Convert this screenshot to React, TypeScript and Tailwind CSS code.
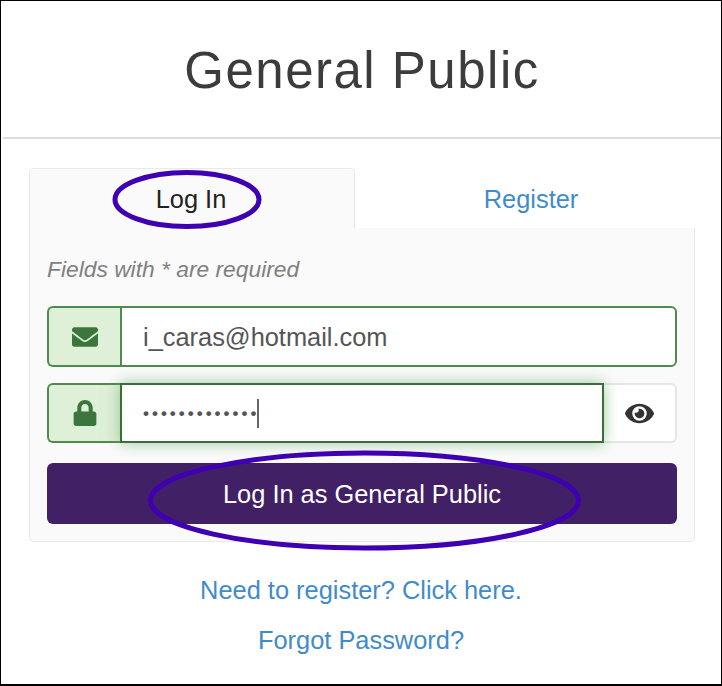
import { FaEnvelope, FaLock, FaEye } from "react-icons/fa";

export default function App() {
  return (
    <div className="relative w-[722px] h-[686px] bg-white border-t border-l border-r border-b-2 border-black overflow-hidden text-[#333] [font-family:'Liberation_Sans',Arial,sans-serif]">
      <div className="ml-[2px] h-[138px] border-b-2 border-[#dcdcdc] flex items-center justify-center">
        <h1 className="text-[51px] leading-[60px] tracking-[1.5px] text-[#3c3c3c] font-normal pt-[4px]">General Public</h1>
      </div>
      <div className="ml-[28px] w-[666px] mt-[29px]">
        <div className="flex h-[60px]">
          <div className="w-[326px] h-[60px] bg-[#fafafa] border-t border-l border-r border-[#e9e9e9] rounded-t-[5px] flex items-center justify-center text-[25.4px] text-[#222] pt-[2px] pr-[2px]">Log In</div>
          <div className="flex-1 flex items-center justify-center text-[25.4px] text-[#428bca] pl-[12px] pt-[3px]">Register</div>
        </div>
        <div className="h-[314px] bg-[#fafafa] border-l border-r border-b border-[#e9e9e9] rounded-b-[5px] px-[17px] pt-[27px]">
          <p className="text-[22.8px] leading-[28px] italic text-[#808080]">Fields with * are required</p>
          <div className="mt-[23px] h-[61px] flex">
            <div className="w-[73px] bg-[#dff0d8] border-2 border-r-0 border-[#4f8a4f] rounded-l-[6px] flex items-center justify-center text-[#3c763d] text-[26px]"><FaEnvelope /></div>
            <div className="flex-1 bg-white border-2 border-[#4f8a4f] rounded-r-[6px] flex items-center pl-[21px] text-[25.4px] text-[#555] pt-[1px]">i_caras@hotmail.com</div>
          </div>
          <div className="mt-[16px] h-[60px] flex">
            <div className="w-[73px] bg-[#dff0d8] border-2 border-r-0 border-[#4f8a4f] rounded-l-[6px] flex items-center justify-center text-[#3c763d] text-[26px]"><FaLock /></div>
            <div className="relative w-[484px] bg-white border-2 border-[#3c6e3d] shadow-[0_0_14px_rgba(80,160,80,0.55)] flex items-center pl-[21px] text-[#555]">
              <span className="text-[17px] tracking-[3px] font-bold leading-none">•••••••••••••</span>
              <span className="w-[2px] h-[29px] bg-[#666] -ml-[2px]"></span>
            </div>
            <div className="flex-1 bg-white border-2 border-l-0 border-[#e6e6e6] rounded-r-[6px] flex items-center justify-center text-[29px] text-[#333]"><FaEye /></div>
          </div>
          <button className="mt-[20px] w-full h-[61px] bg-[#412066] rounded-[6px] text-white text-[25.4px] flex items-center justify-center pt-[1px]">Log In as General Public</button>
        </div>
      </div>
      <div className="mt-[30px] flex flex-col items-center text-[25.4px] text-[#428bca]">
        <a className="h-[36px] leading-[36px]">Need to register? Click here.</a>
        <a className="mt-[14px] h-[36px] leading-[36px]">Forgot Password?</a>
      </div>
      <svg className="absolute left-0 top-0 pointer-events-none" width="722" height="686" fill="none">
        <ellipse cx="186" cy="198.5" rx="72" ry="27" stroke="#3e00b0" strokeWidth="5" />
        <ellipse cx="363.5" cy="499.5" rx="214" ry="47.5" stroke="#3e00b0" strokeWidth="5" />
      </svg>
    </div>
  );
}
